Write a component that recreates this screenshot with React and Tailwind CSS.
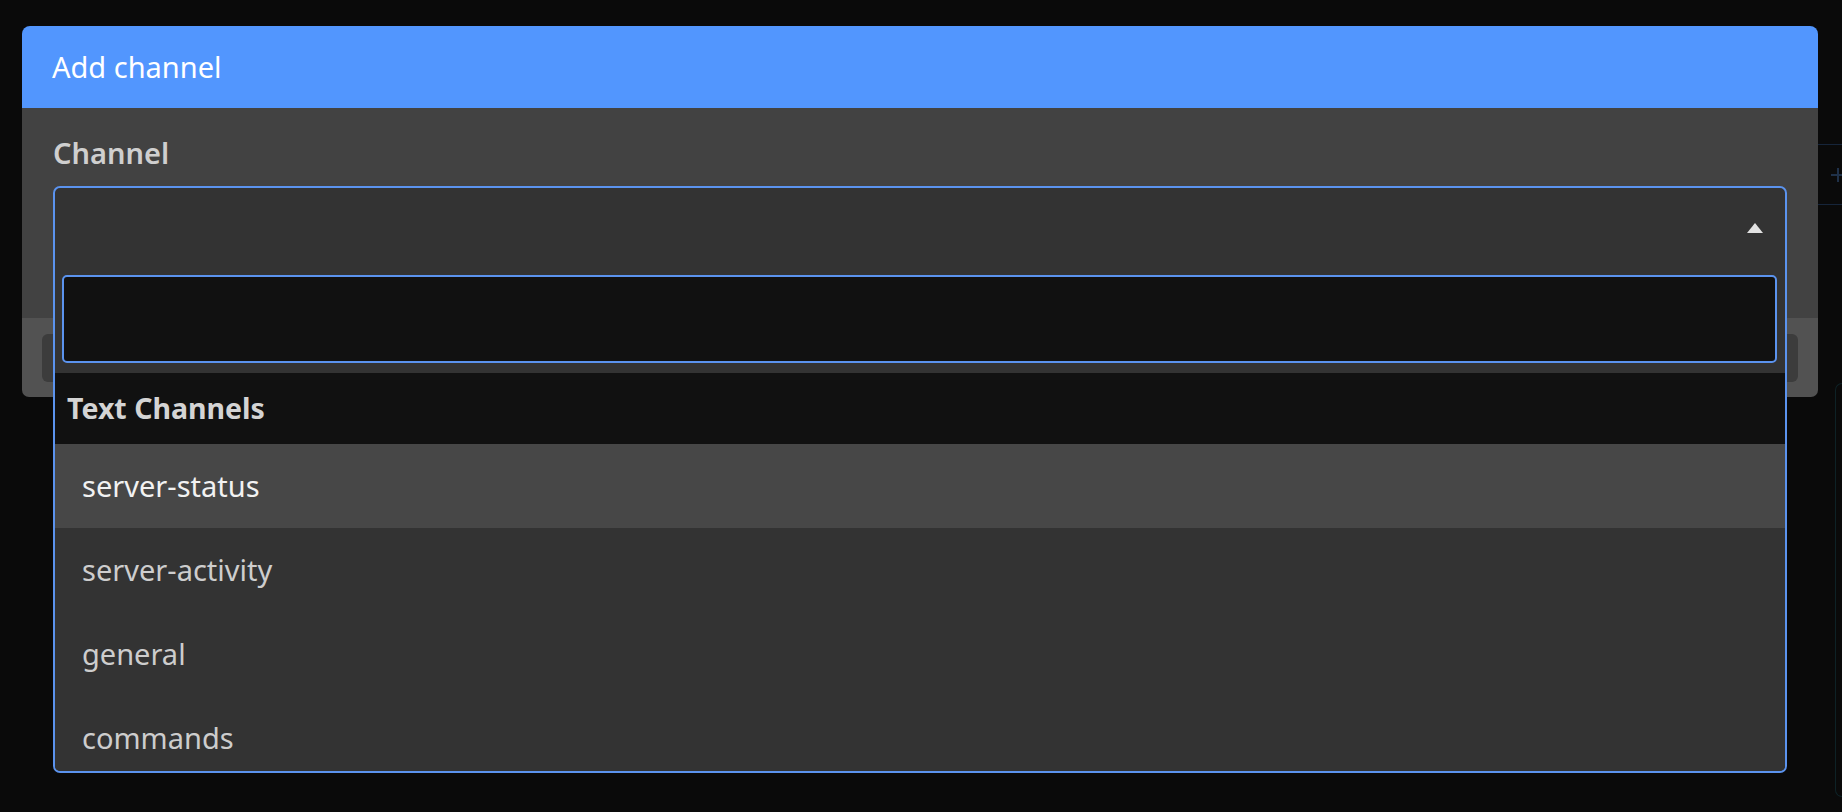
import { useState } from 'react';

const CHANNELS = ['server-status', 'server-activity', 'general', 'commands'];

function ChannelSelect() {
  const [query, setQuery] = useState('');
  const [active, setActive] = useState('server-status');

  return (
    <div className="relative h-[89px]">
      {/* open dropdown spills over the modal */}
      <div className="absolute top-0 left-0 right-0 z-10 border-2 border-[#5b93ee] rounded-[7px] bg-[#333333] overflow-hidden">
        <div className="h-[87px] flex items-start justify-end pt-[35px] pr-[22px]">
          <div className="w-0 h-0 border-x-[8px] border-x-transparent border-b-[10px] border-b-[#e2e2e2]" />
        </div>
        <div className="pl-[7px] pr-[8px]">
          <input
            type="text"
            value={query}
            onChange={(e) => setQuery(e.target.value)}
            className="block w-full h-[88px] bg-[#111111] border-2 border-[#5b93ee] rounded-[5px] px-3 text-[29px] text-[#e0e0e0] outline-none"
          />
        </div>
        <div className="h-[10px]" />
        <div className="h-[398px] overflow-hidden">
          <div className="h-[71px] bg-[#111111] flex items-center pl-[12px] text-[28.5px] font-bold text-[#d4d4d4]">
            Text Channels
          </div>
          {CHANNELS.map((name) => (
            <div
              key={name}
              onMouseEnter={() => setActive(name)}
              className={`h-[84px] shrink-0 flex items-center pl-[27px] text-[29px] ${
                active === name ? 'bg-[#474747] text-[#f2f2f2]' : 'bg-[#333333] text-[#cdcdcd]'
              }`}
            >
              {name}
            </div>
          ))}
        </div>
      </div>
    </div>
  );
}

export default function App() {
  return (
    <div className="relative w-full h-[812px] bg-[#0a0a0a] overflow-hidden font-['Noto_Sans',sans-serif]">
      {/* dimmed page behind the modal */}
      <div className="flex h-full justify-end">
        <div className="w-[24px] pt-[144px] flex flex-col">
          <div className="h-[61px] border-y border-[#16253a] flex items-center pl-[13px]">
            <div className="relative w-[14px] h-[14px]">
              <div className="absolute left-[6px] top-0 w-[2px] h-[14px] bg-[#1f3149]" />
              <div className="absolute top-[6px] left-0 w-[14px] h-[2px] bg-[#1f3149]" />
            </div>
          </div>
          <div className="mt-[178px] ml-[17px] h-[414px] rounded-l-[10px] border border-r-0 border-[#0e2226]" />
        </div>
      </div>

      {/* Modal */}
      <div className="absolute top-[26px] left-[22px] w-[1796px]">
        <div className="h-[82px] bg-[#5296fe] rounded-t-[8px] flex items-center px-[30px] text-[29px] text-white">
          Add channel
        </div>
        <div className="h-[210px] bg-[#424242] px-[31px] pt-[25px]">
          <div className="text-[29px] leading-[40px] font-semibold text-[#cfcfcf] mb-[13px]">Channel</div>
          <ChannelSelect />
        </div>
        <div className="h-[79px] bg-[#525252] rounded-b-[7px] flex items-center justify-between px-[20px]">
          <button className="h-[48px] px-6 rounded-[6px] bg-[#3c3c3c] text-[24px] text-[#dddddd]">Cancel</button>
          <button className="h-[48px] px-6 rounded-[6px] bg-[#3c3c3c] text-[24px] text-[#dddddd]">Add</button>
        </div>
      </div>
    </div>
  );
}
